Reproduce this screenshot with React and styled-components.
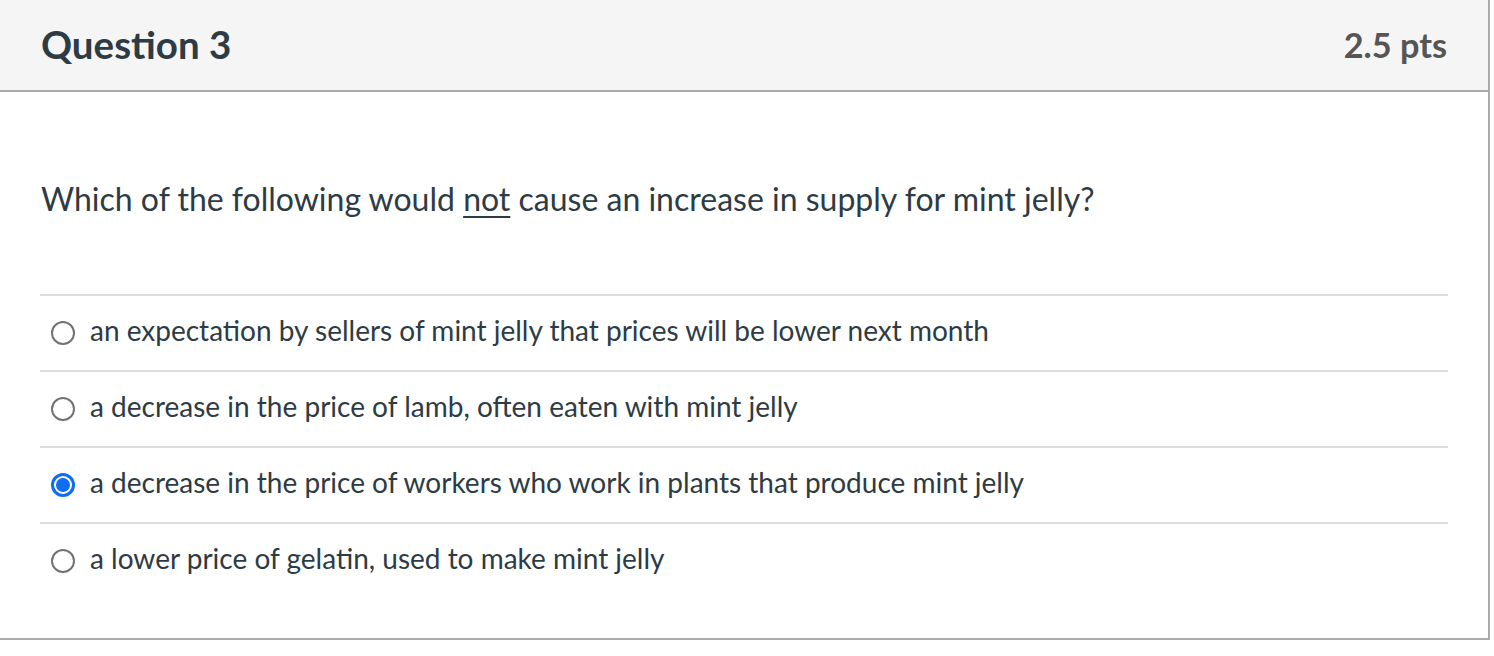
import React from "react";
import styled, { createGlobalStyle } from "styled-components";

const GlobalStyle = createGlobalStyle`
  body {
    margin: 0;
    background: #fff;
    font-family: Lato, "Liberation Sans", sans-serif;
  }
`;

const Card = styled.div`
  width: 1488px;
  border-right: 2px solid #ababab;
  border-bottom: 2px solid #ababab;
  background: #fff;
`;

const Header = styled.div`
  height: 92px;
  box-sizing: border-box;
  background: #f5f5f5;
  border-bottom: 2px solid #ababab;
  display: flex;
  align-items: center;
  justify-content: space-between;
  padding: 0 41px 0 41px;
`;

const Title = styled.h2`
  margin: 0;
  font-size: 38.5px;
  font-weight: 700;
  color: #2d3b45;
  padding-bottom: 2px;
`;

const Points = styled.div`
  font-size: 34.3px;
  font-weight: 700;
  color: #555;
  padding-bottom: 2px;
`;

const Body = styled.div`
  padding: 0 40px 40px 40px;
`;

const QuestionText = styled.p`
  margin: 0;
  padding: 89px 0 77px 1px;
  font-size: 32px;
  line-height: 36px;
  color: #2d3b45;

  u {
    text-underline-offset: 5px;
    text-decoration-thickness: 2px;
  }
`;

const Answers = styled.div`
  display: flex;
  flex-direction: column;
`;

const Answer = styled.label`
  display: flex;
  align-items: center;
  gap: 15px;
  height: 76px;
  box-sizing: border-box;
  border-top: 2px solid #dddddd;
  padding-left: 11px;
  font-size: 28px;
  color: #2d3b45;
`;

const AnswerText = styled.span`
  padding-bottom: 6px;
`;

const Radio = styled.span`
  width: 24px;
  height: 24px;
  box-sizing: border-box;
  border-radius: 50%;
  border: ${(p) => (p.$checked ? "3px solid #0d6ef3" : "2px solid #737373")};
  display: flex;
  align-items: center;
  justify-content: center;
  flex-shrink: 0;

  &::after {
    content: "";
    display: ${(p) => (p.$checked ? "block" : "none")};
    width: 14px;
    height: 14px;
    border-radius: 50%;
    background: #0d6ef3;
  }
`;

const answers = [
  { text: "an expectation by sellers of mint jelly that prices will be lower next month" },
  { text: "a decrease in the price of lamb, often eaten with mint jelly" },
  { text: "a decrease in the price of workers who work in plants that produce mint jelly", checked: true },
  { text: "a lower price of gelatin, used to make mint jelly" },
];

export default function App() {
  return (
    <>
      <GlobalStyle />
      <Card>
        <Header>
          <Title>Question 3</Title>
          <Points>2.5 pts</Points>
        </Header>
        <Body>
          <QuestionText>
            Which of the following would <u>not</u> cause an increase in supply for mint jelly?
          </QuestionText>
          <Answers>
            {answers.map((a, i) => (
              <Answer key={i}>
                <Radio $checked={a.checked} />
                <AnswerText>{a.text}</AnswerText>
              </Answer>
            ))}
          </Answers>
        </Body>
      </Card>
    </>
  );
}
